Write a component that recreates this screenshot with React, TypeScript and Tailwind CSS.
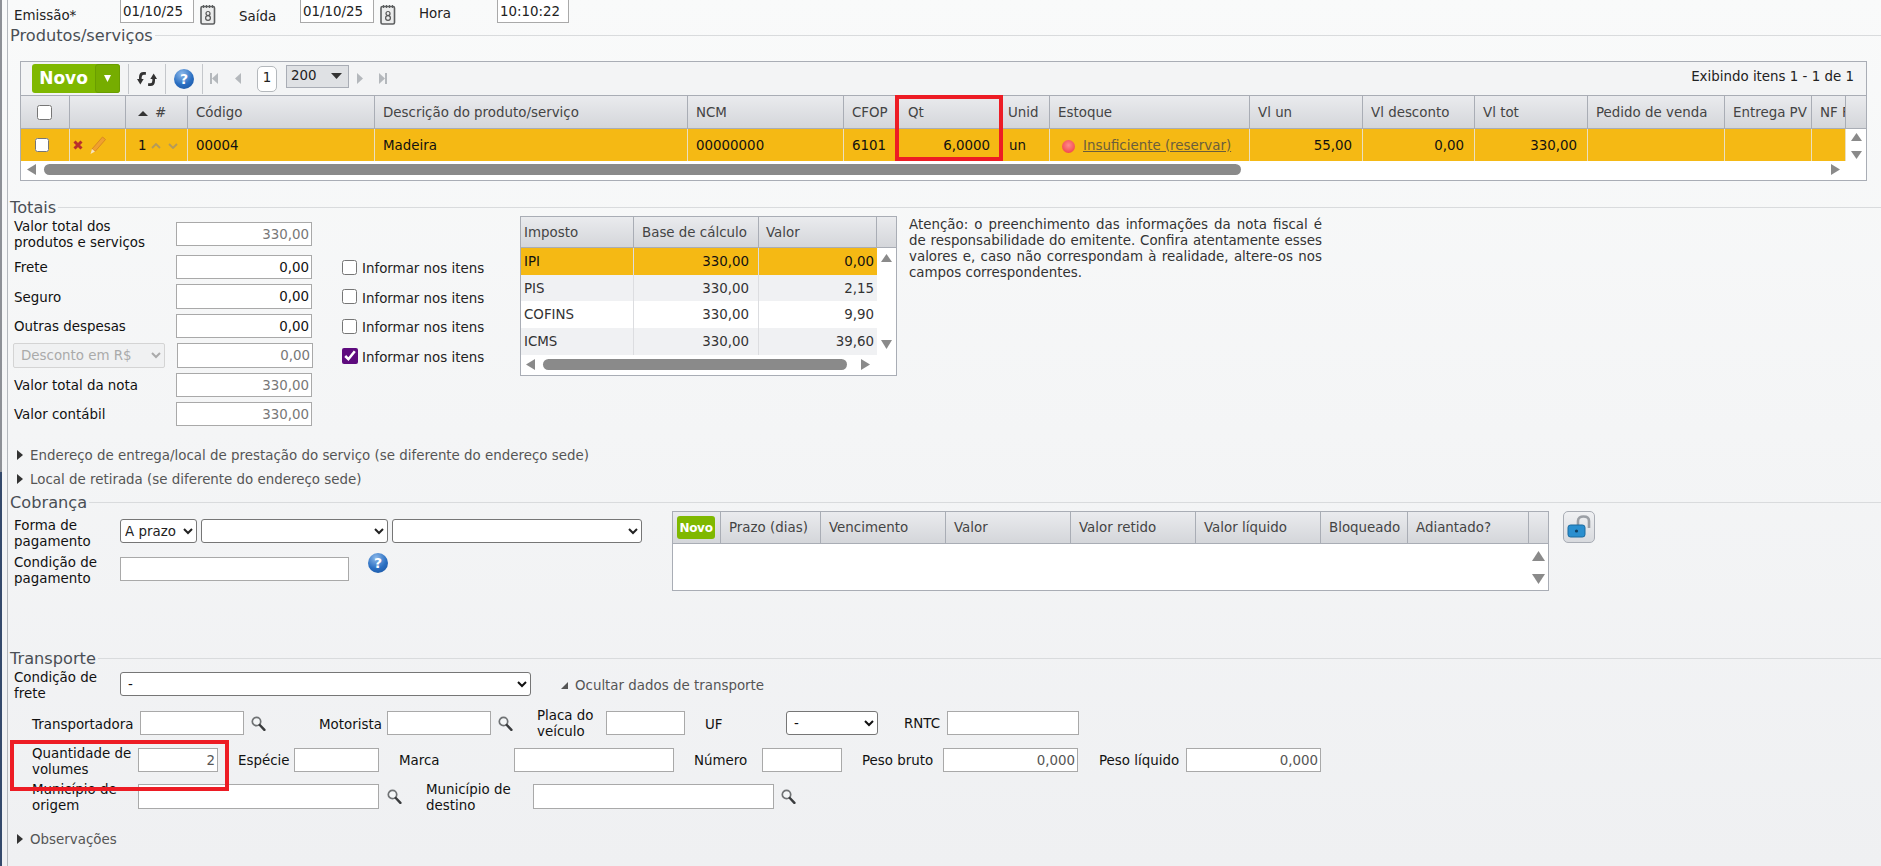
import type { ReactNode } from "react";

const inputBase =
  "h-full bg-white border border-[#a9a9a9] outline-none px-[2px] text-[13.4px] min-w-0";

function Tri({ dir, className }: { dir: "up" | "down" | "left" | "right" | "corner"; className: string }) {
  const points = {
    up: "5,0 10,10 0,10",
    down: "0,0 10,0 5,10",
    left: "10,0 10,10 0,5",
    right: "0,0 10,5 0,10",
    corner: "10,0 10,10 0,10",
  }[dir];
  return (
    <svg viewBox="0 0 10 10" preserveAspectRatio="none" className={className}>
      <polygon points={points} fill="currentColor" />
    </svg>
  );
}

function Field({
  w,
  h = "h-[24px]",
  value = "",
  tone = "text-[#222]",
  right = false,
}: {
  w: string;
  h?: string;
  value?: string;
  tone?: string;
  right?: boolean;
}) {
  return (
    <div className={`${w} ${h} shrink-0`}>
      <input
        readOnly
        value={value}
        className={`${inputBase} w-full ${tone} ${right ? "text-right" : ""}`}
      />
    </div>
  );
}

function Section({ title }: { title: string }) {
  return (
    <div className="flex items-center h-[18px]">
      <span className="text-[16.2px] leading-[18px] text-[#4a4f55] whitespace-nowrap pl-[2px]">{title}</span>
      <div className="h-px bg-[#d9dbdd] ml-[2px] flex-1 -translate-y-[1px]" />
    </div>
  );
}

function CalendarIcon() {
  return (
    <svg viewBox="0 0 16 21" className="w-[16px] h-[21px] shrink-0">
      <rect x="1" y="2.5" width="13.5" height="17.5" rx="1.5" fill="#eceded" stroke="#5d5f60" strokeWidth="1.6" />
      <path d="M3.5 1v3M6.5 1v3M9.5 1v3M12.5 1v3" stroke="#5d5f60" strokeWidth="1.2" />
      <circle cx="8" cy="9.5" r="2" fill="none" stroke="#555" strokeWidth="1.2" />
      <circle cx="8" cy="14" r="2.4" fill="none" stroke="#555" strokeWidth="1.2" />
    </svg>
  );
}

function SearchIcon() {
  return (
    <svg viewBox="0 0 15 15" className="w-[15px] h-[15px] shrink-0">
      <circle cx="5.5" cy="5.5" r="4.2" fill="#f4f6f7" stroke="#6f7274" strokeWidth="1.7" />
      <path d="M8.8 9l4.6 4.8" stroke="#3a3c3e" strokeWidth="2.5" strokeLinecap="round" />
    </svg>
  );
}

function HelpIcon({ size }: { size: string }) {
  return (
    <span
      className={`${size} shrink-0 rounded-full bg-[radial-gradient(circle_at_40%_25%,#8db9ea,#2a6fc2_55%,#174f9c)] text-white font-bold flex items-center justify-center text-[14px] leading-none`}
    >
      ?
    </span>
  );
}

function HeaderCell({ w, children, pl = "pl-[8px]" }: { w: string; children?: ReactNode; pl?: string }) {
  return (
    <div className={`${w} shrink-0 h-full flex items-center pt-[2px] ${pl} border-r border-[#a9adb5] overflow-hidden whitespace-nowrap`}>
      {children}
    </div>
  );
}

function DataCell({
  w,
  children,
  right = false,
}: {
  w: string;
  children?: ReactNode;
  right?: boolean;
}) {
  return (
    <div
      className={`${w} shrink-0 h-full flex items-center pt-[2px] border-r border-[#eadfc0] overflow-hidden whitespace-nowrap ${
        right ? "justify-end pr-[10px]" : "pl-[8px]"
      }`}
    >
      {children}
    </div>
  );
}

function Scrollbar({ children }: { children: ReactNode }) {
  return <div className="flex items-center h-[11px]">{children}</div>;
}

function ProductGrid() {
  return (
    <div className="relative ml-[12px] w-[1847px] h-[120px] border border-[#a9adb5] bg-[#f3f4f5] mt-[16px]">
      {/* toolbar */}
      <div className="h-[34px] flex items-center text-[#222] pl-[11px] border-b border-[#a9adb5]">
        <div className="flex h-[29px] w-[88px] rounded-[3px] bg-[#7fb800] text-white font-bold text-[17px]">
          <span className="w-[63px] flex items-center justify-center">Novo</span>
          <span className="flex-1 flex items-center justify-center border border-[#6a9e00] bg-[#76ad00] rounded-[3px]">
            <Tri dir="down" className="w-[7px] h-[7px] text-white" />
          </span>
        </div>
        <div className="w-px h-[30px] bg-[#c4c7cb] ml-[8px]" />
        <div className="w-[36px] flex justify-center">
          <svg viewBox="0 0 18 14" className="w-[20px] h-[16px]">
            <path d="M8 2H6C4 2 3 3.500 3 5.500V8" fill="none" stroke="#333" strokeWidth="2.400" />
            <path d="M0 7h6L3 12z" fill="#333" />
            <path d="M10 12h2c2 0 3-1.500 3-3.500V6" fill="none" stroke="#333" strokeWidth="2.400" />
            <path d="M12 7h6L15 2z" fill="#333" />
          </svg>
        </div>
        <div className="w-px h-[30px] bg-[#c4c7cb]" />
        <div className="w-[36px] flex justify-center">
          <HelpIcon size="w-[20px] h-[20px]" />
        </div>
        <div className="w-px h-[30px] bg-[#c4c7cb]" />
        <div className="flex items-center w-[54px] pl-[7px] text-[#b4b8bc]">
          <span className="w-[2px] h-[11px] bg-current" />
          <Tri dir="left" className="w-[6px] h-[11px]" />
          <Tri dir="left" className="w-[6px] h-[11px] ml-[17px]" />
        </div>
        <div className="w-[20px] h-[26px] rounded-[5px] bg-white border border-[#b4b8bc] flex items-center justify-center text-[13.4px]">1</div>
        <div className="ml-[9px] w-[63px] h-[23px] -mt-[5px] bg-[#dfe1e4] border border-[#a9adb5] flex items-center justify-between pl-[4px] pr-[6px] text-[13.4px]">
          200
          <Tri dir="down" className="w-[11px] h-[6px] text-[#333]" />
        </div>
        <Tri dir="right" className="w-[6px] h-[11px] ml-[8px] text-[#b4b8bc]" />
        <Tri dir="right" className="w-[6px] h-[11px] ml-[16px] text-[#b4b8bc]" />
        <span className="w-[2px] h-[11px] bg-[#b4b8bc]" />
        <span className="ml-auto pr-[12px] text-[13.4px] -mt-[3px]">Exibindo itens 1 - 1 de 1</span>
      </div>
      {/* header */}
      <div className="h-[33px] flex items-center bg-gradient-to-b from-[#eaebee] to-[#d4d6da] border-b border-[#a9adb5] text-[#444] text-[13.4px]">
        <HeaderCell w="w-[49px]" pl="pl-[16px]">
          <input readOnly type="checkbox" className="w-[15px] h-[15px] m-0 -mt-[2px]" />
        </HeaderCell>
        <HeaderCell w="w-[56px]" />
        <HeaderCell w="w-[62px]" pl="pl-[12px]">
          <Tri dir="up" className="w-[10px] h-[5px] text-[#333] mr-[7px]" />#
        </HeaderCell>
        <HeaderCell w="w-[187px]">Código</HeaderCell>
        <HeaderCell w="w-[313px]">Descrição do produto/serviço</HeaderCell>
        <HeaderCell w="w-[156px]">NCM</HeaderCell>
        <HeaderCell w="w-[54px]">CFOP</HeaderCell>
        <HeaderCell w="w-[103px]" pl="pl-[10px]">Qt</HeaderCell>
        <HeaderCell w="w-[49px]" pl="pl-[7px]">Unid</HeaderCell>
        <HeaderCell w="w-[200px]">Estoque</HeaderCell>
        <HeaderCell w="w-[113px]">Vl un</HeaderCell>
        <HeaderCell w="w-[112px]">Vl desconto</HeaderCell>
        <HeaderCell w="w-[113px]">Vl tot</HeaderCell>
        <HeaderCell w="w-[137px]">Pedido de venda</HeaderCell>
        <HeaderCell w="w-[87px]">Entrega PV</HeaderCell>
        <HeaderCell w="w-[34px]">NF F</HeaderCell>
      </div>
      {/* row */}
      <div className="h-[32px] flex">
        <div className="flex bg-[#f5b914] text-[#111] text-[13.4px] w-[1825px] shrink-0">
          <DataCell w="w-[49px]">
            <input readOnly type="checkbox" className="w-[14px] h-[14px] m-0 ml-[6px] -mt-[3px]" />
          </DataCell>
          <DataCell w="w-[56px]">
            <svg viewBox="0 0 10 10" className="w-[10px] h-[10px] -ml-[5px] -mt-[2px]">
              <path d="M1.500 1.500l7 7M8.500 1.500l-7 7" stroke="#b8302c" strokeWidth="3" />
            </svg>
            <svg viewBox="0 0 18 20" className="w-[18px] h-[20px] ml-[6px] -mt-[2px]">
              <path d="M3 14L13.500 2l3 2.500L6 16.500z" fill="#f0a030" stroke="#d98a20" strokeWidth="1" />
              <path d="M3 14l3 2.500L1.500 19z" fill="#f7e4c0" />
            </svg>
          </DataCell>
          <DataCell w="w-[62px]">
            <span className="ml-[4px]">1</span>
            <svg viewBox="0 0 10 6" className="w-[10px] h-[6px] ml-[4px]">
              <path d="M1 5l4-4 4 4" fill="none" stroke="#b39a5c" strokeWidth="1.800" />
            </svg>
            <svg viewBox="0 0 10 6" className="w-[10px] h-[6px] ml-[7px]">
              <path d="M1 1l4 4 4-4" fill="none" stroke="#b39a5c" strokeWidth="1.800" />
            </svg>
          </DataCell>
          <DataCell w="w-[187px]">00004</DataCell>
          <DataCell w="w-[313px]">Madeira</DataCell>
          <DataCell w="w-[156px]">00000000</DataCell>
          <DataCell w="w-[54px]">6101</DataCell>
          <DataCell w="w-[103px]" right>
            6,0000
          </DataCell>
          <DataCell w="w-[49px]">un</DataCell>
          <DataCell w="w-[200px]">
            <span className="w-[13px] h-[13px] ml-[4px] rounded-full bg-[radial-gradient(circle_at_50%_40%,#ff8a8a,#f0343c)] shrink-0" />
            <span className="ml-[8px] underline text-[#6b5e3c]">Insuficiente (reservar)</span>
          </DataCell>
          <DataCell w="w-[113px]" right>
            55,00
          </DataCell>
          <DataCell w="w-[112px]" right>
            0,00
          </DataCell>
          <DataCell w="w-[113px]" right>
            330,00
          </DataCell>
          <DataCell w="w-[137px]" />
          <DataCell w="w-[87px]" />
          <DataCell w="w-[34px]" />
        </div>
        <div className="flex-1 bg-white flex flex-col items-center pt-[4px] text-[#8a8a8a]">
          <Tri dir="up" className="w-[11px] h-[8px]" />
          <Tri dir="down" className="w-[11px] h-[8px] mt-[10px]" />
        </div>
      </div>
      {/* scrollbar */}
      <div className="h-[19px] bg-white pt-[3px] text-[#8a8a8a] pl-[6px]">
        <Scrollbar>
          <Tri dir="left" className="w-[9px] h-[11px]" />
          <div className="w-[1197px] h-[11px] rounded-full bg-[#8a8a8a] ml-[8px]" />
          <Tri dir="right" className="w-[9px] h-[11px] ml-[590px]" />
        </Scrollbar>
      </div>
      {/* highlight around the Qt column */}
      <div className="absolute left-[874px] top-[33px] w-[108px] h-[66px] border-[4px] border-[#ed1c24]" />
    </div>
  );
}

function TotalRow({
  top,
  label,
  h,
  value,
  muted = false,
  check,
}: {
  top: string;
  label: ReactNode;
  h: string;
  value: string;
  muted?: boolean;
  check?: boolean;
}) {
  return (
    <div className={`flex items-center ${top} ${h}`}>
      <div className="w-[168px] pl-[6px] mt-[2px] shrink-0 leading-[16px] text-[#111] whitespace-nowrap">{label}</div>
      <Field w="w-[136px]" h="h-full" value={value} right tone={muted ? "text-[#777]" : "text-[#111]"} />
      {check && (
        <div className="flex items-center ml-[30px]">
          <input readOnly type="checkbox" className="w-[15px] h-[15px] m-0" />
          <span className="ml-[5px] mt-[5px] text-[#222]">Informar nos itens</span>
        </div>
      )}
    </div>
  );
}

function TaxGrid() {
  const rows = [
    { name: "IPI", base: "330,00", value: "0,00", bg: "bg-[#f5b914] text-[#111]", h: "h-[27px]" },
    { name: "PIS", base: "330,00", value: "2,15", bg: "bg-[#f0f1f3]", h: "h-[26px]" },
    { name: "COFINS", base: "330,00", value: "9,90", bg: "bg-white", h: "h-[27px]" },
    { name: "ICMS", base: "330,00", value: "39,60", bg: "bg-[#f0f1f3]", h: "h-[27px]" },
  ];
  return (
    <div className="w-[377px] h-[160px] border border-[#a9adb5] bg-white shrink-0 text-[13.4px] text-[#333]">
      <div className="h-[31px] flex bg-gradient-to-b from-[#eaebee] to-[#d4d6da] border-b border-[#a9adb5] text-[#444]">
        <HeaderCell w="w-[113px]" pl="pl-[3px]">Imposto</HeaderCell>
        <HeaderCell w="w-[125px]" pl="pl-[8px]">Base de cálculo</HeaderCell>
        <HeaderCell w="w-[118px]" pl="pl-[7px]">Valor</HeaderCell>
      </div>
      <div className="flex h-[107px]">
        <div className="w-[356px] shrink-0">
          {rows.map((r) => (
            <div key={r.name} className={`flex ${r.bg} ${r.h}`}>
              <div className="w-[113px] pl-[3px] pt-[2px] flex items-center border-r border-[#dcdde0]">{r.name}</div>
              <div className="w-[125px] pr-[9px] pt-[2px] flex items-center justify-end border-r border-[#dcdde0]">{r.base}</div>
              <div className="w-[118px] pr-[3px] pt-[2px] flex items-center justify-end">{r.value}</div>
            </div>
          ))}
        </div>
        <div className="flex-1 flex flex-col items-center justify-between py-[6px] text-[#8a8a8a]">
          <Tri dir="up" className="w-[11px] h-[8px]" />
          <Tri dir="down" className="w-[11px] h-[9px]" />
        </div>
      </div>
      <div className="pt-[4px] pl-[5px] text-[#8a8a8a]">
        <Scrollbar>
          <Tri dir="left" className="w-[9px] h-[11px]" />
          <div className="w-[304px] h-[11px] rounded-full bg-[#8a8a8a] ml-[8px]" />
          <Tri dir="right" className="w-[9px] h-[11px] ml-[14px]" />
        </Scrollbar>
      </div>
    </div>
  );
}

function Totais() {
  return (
    <div className="flex mt-[6px]">
      <div className="w-[512px] shrink-0 text-[13.4px]">
        <TotalRow top="mt-[0px]" h="h-[24px]" value="330,00" muted label={<span className="block">Valor total dos<br />produtos e serviços</span>} />
        <TotalRow top="mt-[9px]" h="h-[24px]" value="0,00" label="Frete" check />
        <TotalRow top="mt-[5px]" h="h-[25px]" value="0,00" label="Seguro" check />
        <TotalRow top="mt-[5px]" h="h-[24px]" value="0,00" label="Outras despesas" check />
        <div className="flex items-center mt-[5px] h-[25px]">
          <select disabled className="ml-[5px] w-[152px] h-[25px] border border-[#d4d4d4] rounded-[2px] bg-[#f0f1f2] text-[#aaa] text-[13.4px] pl-[3px] shrink-0">
            <option>Desconto em R$</option>
          </select>
          <div className="ml-[12px]">
            <Field w="w-[136px]" h="h-[25px]" value="0,00" right tone="text-[#777]" />
          </div>
          <div className="flex items-center ml-[29px]">
            <input readOnly type="checkbox" checked className="w-[16px] h-[16px] m-0 accent-[#5e0b7e]" />
            <span className="ml-[4px] mt-[5px] text-[#222]">Informar nos itens</span>
          </div>
        </div>
        <TotalRow top="mt-[5px]" h="h-[24px]" value="330,00" muted label="Valor total da nota" />
        <TotalRow top="mt-[5px]" h="h-[24px]" value="330,00" muted label="Valor contábil" />
      </div>
      <div className="-mt-[6px]">
        <TaxGrid />
      </div>
      <p className="w-[413px] ml-[12px] -mt-[5px] text-[13.4px] leading-[16px] text-[#333] text-justify">
        Atenção: o preenchimento das informações da nota fiscal é de responsabilidade do emitente. Confira atentamente esses valores e, caso não correspondam à realidade, altere-os nos campos correspondentes.
      </p>
    </div>
  );
}

function Accordion({ text, className }: { text: string; className: string }) {
  return (
    <div className={`flex items-center h-[16px] text-[13.4px] text-[#555] ${className}`}>
      <Tri dir="right" className="w-[6px] h-[10px] text-[#333] ml-[9px]" />
      <span className="ml-[7px] mt-[2px]">{text}</span>
    </div>
  );
}

function Cobranca() {
  const heads = [
    { w: "w-[100px]", t: "Prazo (dias)" },
    { w: "w-[125px]", t: "Vencimento" },
    { w: "w-[125px]", t: "Valor" },
    { w: "w-[125px]", t: "Valor retido" },
    { w: "w-[125px]", t: "Valor líquido" },
    { w: "w-[87px]", t: "Bloqueado" },
    { w: "w-[121px]", t: "Adiantado?" },
  ];
  return (
    <div className="flex mt-[7px] text-[13.4px]">
      <div className="w-[664px] shrink-0">
        <div className="flex items-center h-[24px]">
          <div className="w-[112px] pl-[6px] mt-[6px] shrink-0 leading-[16px] text-[#111]">
            Forma de<br />pagamento
          </div>
          <select className="w-[77px] h-[24px] border border-[#767676] rounded-[3px] bg-white text-[13.4px] shrink-0">
            <option>A prazo</option>
          </select>
          <select className="w-[187px] h-[24px] ml-[4px] border border-[#767676] rounded-[3px] bg-white shrink-0" />
          <select className="w-[250px] h-[24px] ml-[4px] border border-[#767676] rounded-[3px] bg-white shrink-0" />
        </div>
        <div className="flex items-center h-[24px] mt-[14px]">
          <div className="w-[112px] pl-[6px] mt-[4px] shrink-0 leading-[16px] text-[#111]">
            Condição de<br />pagamento
          </div>
          <Field w="w-[229px]" />
          <div className="ml-[19px] -mt-[12px]">
            <HelpIcon size="w-[20px] h-[20px]" />
          </div>
        </div>
      </div>
      <div className="w-[877px] h-[80px] border border-[#a9adb5] bg-white shrink-0 -mt-[8px]">
        <div className="h-[32px] flex bg-gradient-to-b from-[#eaebee] to-[#d4d6da] border-b border-[#a9adb5] text-[#444]">
          <div className="w-[48px] shrink-0 border-r border-[#a9adb5] flex items-center pl-[4px]">
            <span className="w-[38px] h-[23px] rounded-[3px] bg-[#7fb800] text-white font-bold text-[12px] flex items-center justify-center tracking-tight">Novo</span>
          </div>
          {heads.map((h) => (
            <HeaderCell key={h.t} w={h.w} pl="pl-[8px]">
              {h.t}
            </HeaderCell>
          ))}
        </div>
        <div className="flex justify-end h-[47px] text-[#8a8a8a]">
          <div className="w-[19px] flex flex-col items-center justify-between py-[7px]">
            <Tri dir="up" className="w-[13px] h-[10px]" />
            <Tri dir="down" className="w-[13px] h-[10px]" />
          </div>
        </div>
      </div>
      <div className="ml-[14px] -mt-[8px] w-[32px] h-[32px] rounded-[5px] border border-[#a9adb5] bg-gradient-to-b from-[#f0f1f3] to-[#d8dade]">
        <svg viewBox="0 0 30 30" className="w-[30px] h-[30px]">
          <path d="M14 14V9c0-3 2.500-4.500 5.500-4.500S25 6 25 9v7" fill="none" stroke="#9b9fa5" strokeWidth="2.600" />
          <rect x="4" y="13" width="17" height="12" rx="2.500" fill="#2a8fcf" stroke="#1a6a9f" />
          <circle cx="12.500" cy="19" r="1.600" fill="#0d3f63" />
        </svg>
      </div>
    </div>
  );
}

function Transporte() {
  return (
    <div className="text-[13.4px] text-[#111] relative">
      <div className="flex items-center h-[24px] mt-[4px]">
        <div className="w-[112px] pl-[6px] mt-[4px] shrink-0 leading-[16px]">
          Condição de<br />frete
        </div>
        <select className="w-[411px] h-[24px] border border-[#767676] rounded-[3px] bg-white shrink-0 pl-[3px]">
          <option>-</option>
        </select>
        <Tri dir="corner" className="w-[7px] h-[7px] ml-[30px] mt-[3px] text-[#555]" />
        <span className="ml-[7px] mt-[4px] text-[#555]">Ocultar dados de transporte</span>
      </div>
      <div className="flex items-center h-[24px] mt-[15px] whitespace-nowrap">
        <span className="w-[132px] pl-[24px] mt-[4px] shrink-0">Transportadora</span>
        <Field w="w-[104px]" />
        <div className="ml-[7px]"><SearchIcon /></div>
        <span className="ml-[53px] mt-[4px] w-[68px]">Motorista</span>
        <Field w="w-[104px]" />
        <div className="ml-[7px]"><SearchIcon /></div>
        <span className="ml-[24px] mt-[2px] w-[69px] leading-[16px]">Placa do<br />veículo</span>
        <Field w="w-[79px]" />
        <span className="ml-[20px] mt-[4px] w-[81px]">UF</span>
        <select className="w-[92px] h-[24px] border border-[#767676] rounded-[3px] bg-white shrink-0 pl-[3px]">
          <option>-</option>
        </select>
        <span className="ml-[26px] mt-[2px] w-[43px]">RNTC</span>
        <Field w="w-[132px]" />
      </div>
      <div className="flex items-center h-[24px] mt-[13px] whitespace-nowrap">
        <span className="w-[130px] pl-[24px] shrink-0 leading-[16px] mt-[3px]">Quantidade de<br />volumes</span>
        <Field w="w-[80px]" value="2" right tone="text-[#555]" />
        <span className="ml-[20px] mt-[2px] w-[56px]">Espécie</span>
        <Field w="w-[85px]" />
        <span className="ml-[20px] mt-[2px] w-[115px]">Marca</span>
        <Field w="w-[160px]" />
        <span className="ml-[20px] mt-[2px] w-[68px]">Número</span>
        <Field w="w-[80px]" />
        <span className="ml-[20px] mt-[2px] w-[81px]">Peso bruto</span>
        <Field w="w-[135px]" value="0,000" right tone="text-[#555]" />
        <span className="ml-[21px] mt-[2px] w-[87px]">Peso líquido</span>
        <Field w="w-[135px]" value="0,000" right tone="text-[#555]" />
      </div>
      <div className="flex items-center h-[25px] mt-[12px] whitespace-nowrap">
        <span className="w-[130px] pl-[24px] mt-[2px] shrink-0 leading-[16px]">Município de<br />origem</span>
        <Field w="w-[241px]" h="h-[25px]" />
        <div className="ml-[8px]"><SearchIcon /></div>
        <span className="ml-[24px] mt-[2px] w-[107px] leading-[16px]">Município de<br />destino</span>
        <Field w="w-[241px]" h="h-[25px]" />
        <div className="ml-[7px]"><SearchIcon /></div>
      </div>
      <Accordion text="Observações" className="mt-[22px]" />
      {/* highlight around the volumes field */}
      <div className="absolute left-[2px] top-[68px] w-[219px] h-[51px] border-[4px] border-[#ed1c24]" />
    </div>
  );
}

export default function App() {
  return (
    <div
      className="w-[1881px] h-[866px] overflow-hidden flex bg-gradient-to-b from-[#f9fafa] to-[#eff0f2] text-[#222]"
      style={{ fontFamily: '"DejaVu Sans", Verdana, sans-serif' }}
    >
      <div className="w-[2px] h-full flex flex-col shrink-0">
        <div className="h-[472px] bg-[#8d9096]" />
        <div className="flex-1 bg-[#34496b]" />
      </div>
      <div className="w-[5px] h-full shrink-0" />
      <div className="flex-1 min-w-0 border-l border-[#b4b8bd]">
        {/* dates */}
        <div className="flex h-[23px] text-[13.4px] leading-[16px]">
          <span className="w-[112px] pl-[6px] pt-[8px]">Emissão*</span>
          <Field w="w-[74px]" h="h-[24px] -mt-px" value="01/10/25" />
          <div className="ml-[6px] mt-[4px]"><CalendarIcon /></div>
          <span className="ml-[23px] w-[61px] pt-[9px]">Saída</span>
          <Field w="w-[74px]" h="h-[24px] -mt-px" value="01/10/25" />
          <div className="ml-[6px] mt-[4px]"><CalendarIcon /></div>
          <span className="ml-[23px] w-[78px] pt-[6px]">Hora</span>
          <Field w="w-[72px]" h="h-[24px] -mt-px" value="10:10:22" />
        </div>
        <div className="mt-[4px]"><Section title="Produtos/serviços" /></div>
        <ProductGrid />
        <div className="mt-[18px]"><Section title="Totais" /></div>
        <div className="-mt-px"><Totais /></div>
        <Accordion text="Endereço de entrega/local de prestação do serviço (se diferente do endereço sede)" className="mt-[21px]" />
        <Accordion text="Local de retirada (se diferente do endereço sede)" className="mt-[8px]" />
        <div className="mt-[7px]"><Section title="Cobrança" /></div>
        <Cobranca />
        <div className="mt-[59px]"><Section title="Transporte" /></div>
        <Transporte />
      </div>
    </div>
  );
}
